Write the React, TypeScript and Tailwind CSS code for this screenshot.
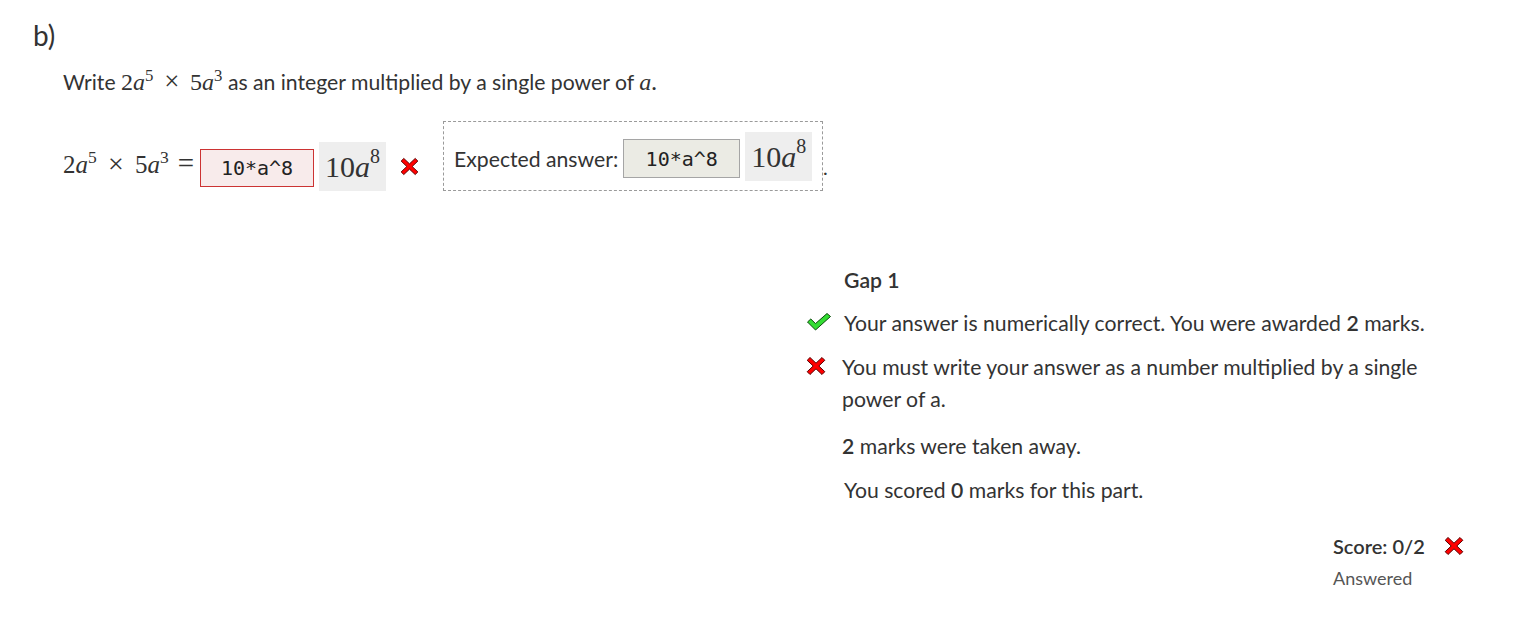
import React from 'react'

const sans = { fontFamily: 'Lato, "Noto Sans", sans-serif' }
const serif = { fontFamily: '"Liberation Serif", serif' }

const Cross = ({ size = 20 }: { size?: number }) => (
    <svg width={size} height={size} viewBox="0 0 20 20">
        <polygon
            points="4,1.5 10,7.2 16,1.5 18.8,4.3 12.8,10 18.8,15.7 16,18.5 10,12.8 4,18.5 1.2,15.7 7.2,10 1.2,4.3"
            fill="#ff0000"
            stroke="#5a0000"
            strokeWidth="1"
            strokeLinejoin="round"
        />
    </svg>
)

const Check = () => (
    <svg width={26} height={20} viewBox="0 0 26 20">
        <polygon
            points="1.5,10 4.8,7 9.5,11.6 21,1.5 24.5,4.5 9.5,18"
            fill="#33dd33"
            stroke="#0a4a0a"
            strokeWidth="1"
            strokeLinejoin="round"
        />
    </svg>
)

const M = ({ children }: { children: React.ReactNode }) => (
    <span className="italic" style={serif}>
        {children}
    </span>
)

const Expr = ({ size }: { size: string }) => (
    <span className={`${size} leading-none whitespace-nowrap`} style={serif}>
        2<M>a</M>
        <sup className="text-[0.7em] !-top-[0.55em]">5</sup>
        <span className="mx-[0.4em] text-[1.12em] leading-none">×</span>5<M>a</M>
        <sup className="text-[0.7em] !-top-[0.55em]">3</sup>
    </span>
)

const Preview = ({ className }: { className: string }) => (
    <span
        className={`flex items-end justify-center bg-[#eeeeee] pb-[9px] text-[30px] text-[#333] ${className}`}
        style={serif}
    >
        <span className="leading-none whitespace-nowrap">
            10
            <M>a</M>
            <sup className="text-[20px] !-top-[14px]">8</sup>
        </span>
    </span>
)

const AnswerBox = ({ className }: { className: string }) => (
    <span
        className={`flex items-center justify-center text-[20px] text-[#222] ${className}`}
        style={{ fontFamily: '"DejaVu Sans Mono", monospace' }}
    >
        10*a^8
    </span>
)

const App = () => {
    return (
        <div className="min-h-[634px] w-[1523px] bg-white text-[#333]" style={sans}>
            <div className="pl-[33px] pt-[17px] text-[28px] leading-[36px]">b)</div>

            <div className="h-[42px] pl-[63px] pt-[14px] text-[21.2px] leading-[28px]">
                Write <Expr size="text-[24px]" /> as an integer multiplied by a single power of{' '}
                <span className="text-[24px]">
                    <M>a</M>.
                </span>
            </div>

            <div className="mt-[26px] flex items-end pl-[63px]">
                <span className="mb-[13px] flex items-end">
                    <Expr size="text-[25px]" />
                    <span className="ml-[9px] text-[29px] leading-none" style={serif}>
                        =
                    </span>
                </span>
                <AnswerBox className="mb-[4px] ml-[6px] h-[38px] w-[114px] border border-[#cc3333] bg-[#f8ebeb]" />
                <Preview className="ml-[5px] h-[49px] w-[67px]" />
                <span className="mb-[15px] ml-[14px]">
                    <Cross size={19} />
                </span>
                <div className="ml-[24px] flex h-[70px] w-[380px] items-end border border-dashed border-[#9a9a9a] pb-[9px] pl-[10px]">
                    <span className="mb-[11px] text-[21.2px] leading-none">Expected answer:</span>
                    <AnswerBox className="mb-[3px] ml-[5px] h-[39px] w-[117px] border border-[#a5a5a5] bg-[#ebebe4]" />
                    <Preview className="ml-[5px] h-[49px] w-[67px]" />
                </div>
                <span className="mb-[14px] text-[20px] leading-none">.</span>
            </div>

            <div className="mt-[73px] flex flex-col pl-[806px] text-[21.2px] leading-[32px]">
                <div className="pl-[38px] font-semibold">Gap 1</div>
                <div className="mt-[11px] flex items-start">
                    <span className="mt-[5px] w-[38px]">
                        <Check />
                    </span>
                    <span>
                        Your answer is numerically correct. You were awarded <b className="font-semibold">2</b>{' '}
                        marks.
                    </span>
                </div>
                <div className="mt-[12px] flex items-start">
                    <span className="mt-[5px] w-[36px]">
                        <Cross />
                    </span>
                    <span className="w-[610px]">
                        You must write your answer as a number multiplied by a single power of a.
                    </span>
                </div>
                <div className="mt-[15px] pl-[36px]">
                    <b className="font-semibold">2</b> marks were taken away.
                </div>
                <div className="mt-[12px] pl-[38px]">
                    You scored <b className="font-semibold">0</b> marks for this part.
                </div>
            </div>

            <div className="mt-[24px] flex flex-col pl-[1333px]">
                <div className="flex items-center text-[20px] font-semibold leading-[32px]">
                    Score: 0/2
                    <span className="ml-[19px]">
                        <Cross />
                    </span>
                </div>
                <div className="text-[18px] leading-[32px] text-[#555]">Answered</div>
            </div>
        </div>
    )
}

export default App
